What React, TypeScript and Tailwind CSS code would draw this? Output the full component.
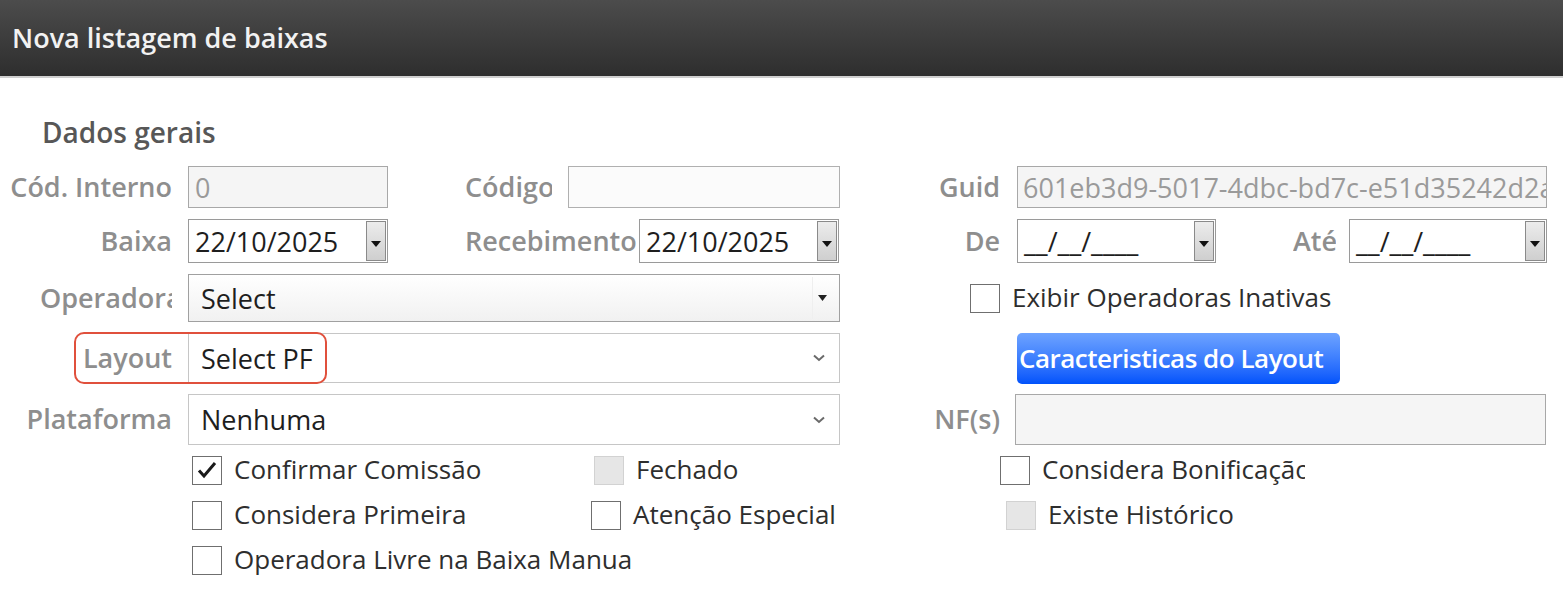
import React from "react";

const labelCls = "shrink-0 whitespace-nowrap overflow-hidden text-[27px] font-semibold text-[#8e8e8e] leading-[1.35]";

function DateBtn() {
  return (
    <div className="absolute right-[1px] top-[1px] bottom-[1px] w-[20px] flex items-center justify-center border border-[#8a8a8a] bg-gradient-to-b from-[#ececec] to-[#cfcfcf]">
      <svg width="10" height="6" viewBox="0 0 10 6" className="mt-[6px]"><path d="M0 0h10L5 6z" fill="#111" /></svg>
    </div>
  );
}

function DateInput({ value, w }: { value: string; w: string }) {
  return (
    <div className={`relative h-full ${w} shrink-0 border-[1.5px] border-[#9a9a9a] bg-white flex items-center pl-[6px] text-[27px] text-[#1e1e1e]`}>
      <span className="leading-none">{value}</span>
      <DateBtn />
    </div>
  );
}

function Chevron() {
  return (
    <svg width="12" height="8" viewBox="0 0 12 8" className="absolute right-[14px] top-1/2 -translate-y-1/2">
      <path d="M1 1.5l5 4.5 5-4.5" fill="none" stroke="#6a6a6a" strokeWidth="2" />
    </svg>
  );
}

function Check({ checked, disabled, label, cls = "" }: { checked?: boolean; disabled?: boolean; label: string; cls?: string }) {
  return (
    <div className={`flex items-center h-full overflow-hidden ${cls}`}>
      <div
        className={`w-[30px] h-[29px] shrink-0 border-[1.5px] flex items-center justify-center ${
          disabled ? "bg-[#e6e6e6] border-[#d2d2d2]" : "bg-white border-[#6f6f6f]"
        }`}
      >
        {checked && (
          <svg width="20" height="18" viewBox="0 0 20 18">
            <path d="M2 9.5l5 5.5L18 2" fill="none" stroke="#1a1a1a" strokeWidth="3" />
          </svg>
        )}
      </div>
      <span className="ml-[12px] whitespace-nowrap text-[26px] text-[#2e2e2e] leading-[1.2]">{label}</span>
    </div>
  );
}

export default function App() {
  return (
    <div className="w-[1563px] h-[609px] overflow-hidden bg-white font-['Open_Sans',sans-serif]">
      <header className="h-[78px] bg-gradient-to-b from-[#4c4c4c] to-[#2e2e2e] border-b-2 border-[#cfcfcf] flex items-center pl-[12px]">
        <h1 className="text-[27px] font-semibold text-[#f2f2f2] leading-none mb-[2px]">Nova listagem de baixas</h1>
      </header>

      <h2 className="mt-[34px] h-[40px] leading-[40px] pl-[42px] text-[28px] font-semibold text-[#575757]">Dados gerais</h2>

      <div className="mt-[14px] flex flex-col gap-[11px]">
        {/* row 1 */}
        <div className="flex items-center h-[42px]">
          <div className={`${labelCls} w-[172px] text-right`}>Cód. Interno</div>
          <div className="ml-[16px] h-full w-[200px] shrink-0 border-[1.5px] border-[#a8a8a8] bg-[#f5f5f5] flex items-center pl-[6px] text-[27px] text-[#9a9a9a] leading-none">0</div>
          <div className={`${labelCls} ml-[77px] w-[87px]`}>Código</div>
          <div className="ml-[16px] h-full w-[272px] shrink-0 border-[1.5px] border-[#b0b0b0] bg-[#fbfbfb]" />
          <div className={`${labelCls} ml-[40px] w-[120px] text-right`}>Guid</div>
          <div className="ml-[17px] h-full w-[530px] shrink-0 overflow-hidden whitespace-nowrap border-[1.5px] border-[#a8a8a8] bg-[#f5f5f5] flex items-center pl-[5px] text-[27px] text-[#9a9a9a] leading-none">
            601eb3d9-5017-4dbc-bd7c-e51d35242d2a
          </div>
        </div>

        {/* row 2 */}
        <div className="flex items-center h-[44px]">
          <div className={`${labelCls} w-[172px] text-right`}>Baixa</div>
          <div className="ml-[16px] h-full flex"><DateInput value="22/10/2025" w="w-[200px]" /></div>
          <div className={`${labelCls} ml-[77px] w-[172px]`}>Recebimento</div>
          <div className="ml-[2px] h-full flex"><DateInput value="22/10/2025" w="w-[200px]" /></div>
          <div className={`${labelCls} ml-[41px] w-[120px] text-right`}>De</div>
          <div className="ml-[17px] h-full flex"><DateInput value="__/__/____" w="w-[199px]" /></div>
          <div className={`${labelCls} ml-[77px] w-[43px]`}>Até</div>
          <div className="ml-[13px] h-full flex"><DateInput value="__/__/____" w="w-[198px]" /></div>
        </div>

        {/* row 3 */}
        <div className="flex items-center h-[48px]">
          <div className="w-[172px] shrink-0 pl-[40px] overflow-hidden">
            <div className="whitespace-nowrap text-[27px] font-semibold text-[#8e8e8e] leading-[1.35]">Operadora</div>
          </div>
          <div className="relative ml-[16px] h-full w-[652px] shrink-0 border-[1.5px] border-[#a0a0a0] bg-gradient-to-b from-white to-[#f1f1f1] flex items-center pl-[12px] text-[27px] text-[#1e1e1e] leading-none">
            Select
            <div className="absolute right-[26px] top-[2px] bottom-[2px] w-px bg-[#efefef]" />
            <svg width="9" height="6" viewBox="0 0 9 6" className="absolute right-[12px] top-1/2 -translate-y-1/2"><path d="M0 0h9L4.5 6z" fill="#222" /></svg>
          </div>
          <div className="ml-[130px] h-full">
            <Check label="Exibir Operadoras Inativas" />
          </div>
        </div>

        {/* row 4 */}
        <div className="relative flex items-center h-[50px]">
          <div className={`${labelCls} w-[172px] text-right`}>Layout</div>
          <div className="relative ml-[16px] h-full w-[652px] shrink-0 border-[1.5px] border-[#c6c6c6] bg-white flex items-center pl-[12px] text-[27px] text-[#1e1e1e] leading-none">
            Select PF
            <Chevron />
          </div>
          <button className="ml-[177px] h-[51px] w-[323px] shrink-0 overflow-hidden whitespace-nowrap rounded-[5px] bg-gradient-to-b from-[#6ea3ff] to-[#0052fb] text-left pl-[2px] text-[26px] font-semibold tracking-[-0.5px] text-white leading-none">
            Caracteristicas do Layout
          </button>
          <div className="absolute left-[74px] top-[-1px] w-[253px] h-[52px] rounded-[10px] border-[2.5px] border-[#e0503c] pointer-events-none" />
        </div>

        {/* row 5 */}
        <div className="flex items-center h-[51px]">
          <div className={`${labelCls} w-[172px] text-right`}>Plataforma</div>
          <div className="relative ml-[16px] h-full w-[652px] shrink-0 border-[1.5px] border-[#c6c6c6] bg-white flex items-center pl-[12px] text-[27px] text-[#1e1e1e] leading-none">
            Nenhuma
            <Chevron />
          </div>
          <div className={`${labelCls} ml-[40px] w-[120px] text-right`}>NF(s)</div>
          <div className="ml-[15px] h-full w-[531px] shrink-0 border-[1.5px] border-[#a8a8a8] bg-[#f5f5f5]" />
        </div>
      </div>

      <div className="mt-[10px] flex flex-col gap-[15px]">
        <div className="flex h-[30px]">
          <Check checked label="Confirmar Comissão" cls="ml-[192px] w-[402px]" />
          <Check disabled label="Fechado" cls="w-[406px]" />
          <Check label="Considera Bonificação" cls="w-[305px]" />
        </div>
        <div className="flex h-[30px]">
          <Check label="Considera Primeira" cls="ml-[192px] w-[399px]" />
          <Check label="Atenção Especial" cls="w-[415px]" />
          <Check disabled label="Existe Histórico" />
        </div>
        <div className="flex h-[30px]">
          <Check label="Operadora Livre na Baixa Manual" cls="ml-[192px] w-[440px]" />
        </div>
      </div>
    </div>
  );
}
